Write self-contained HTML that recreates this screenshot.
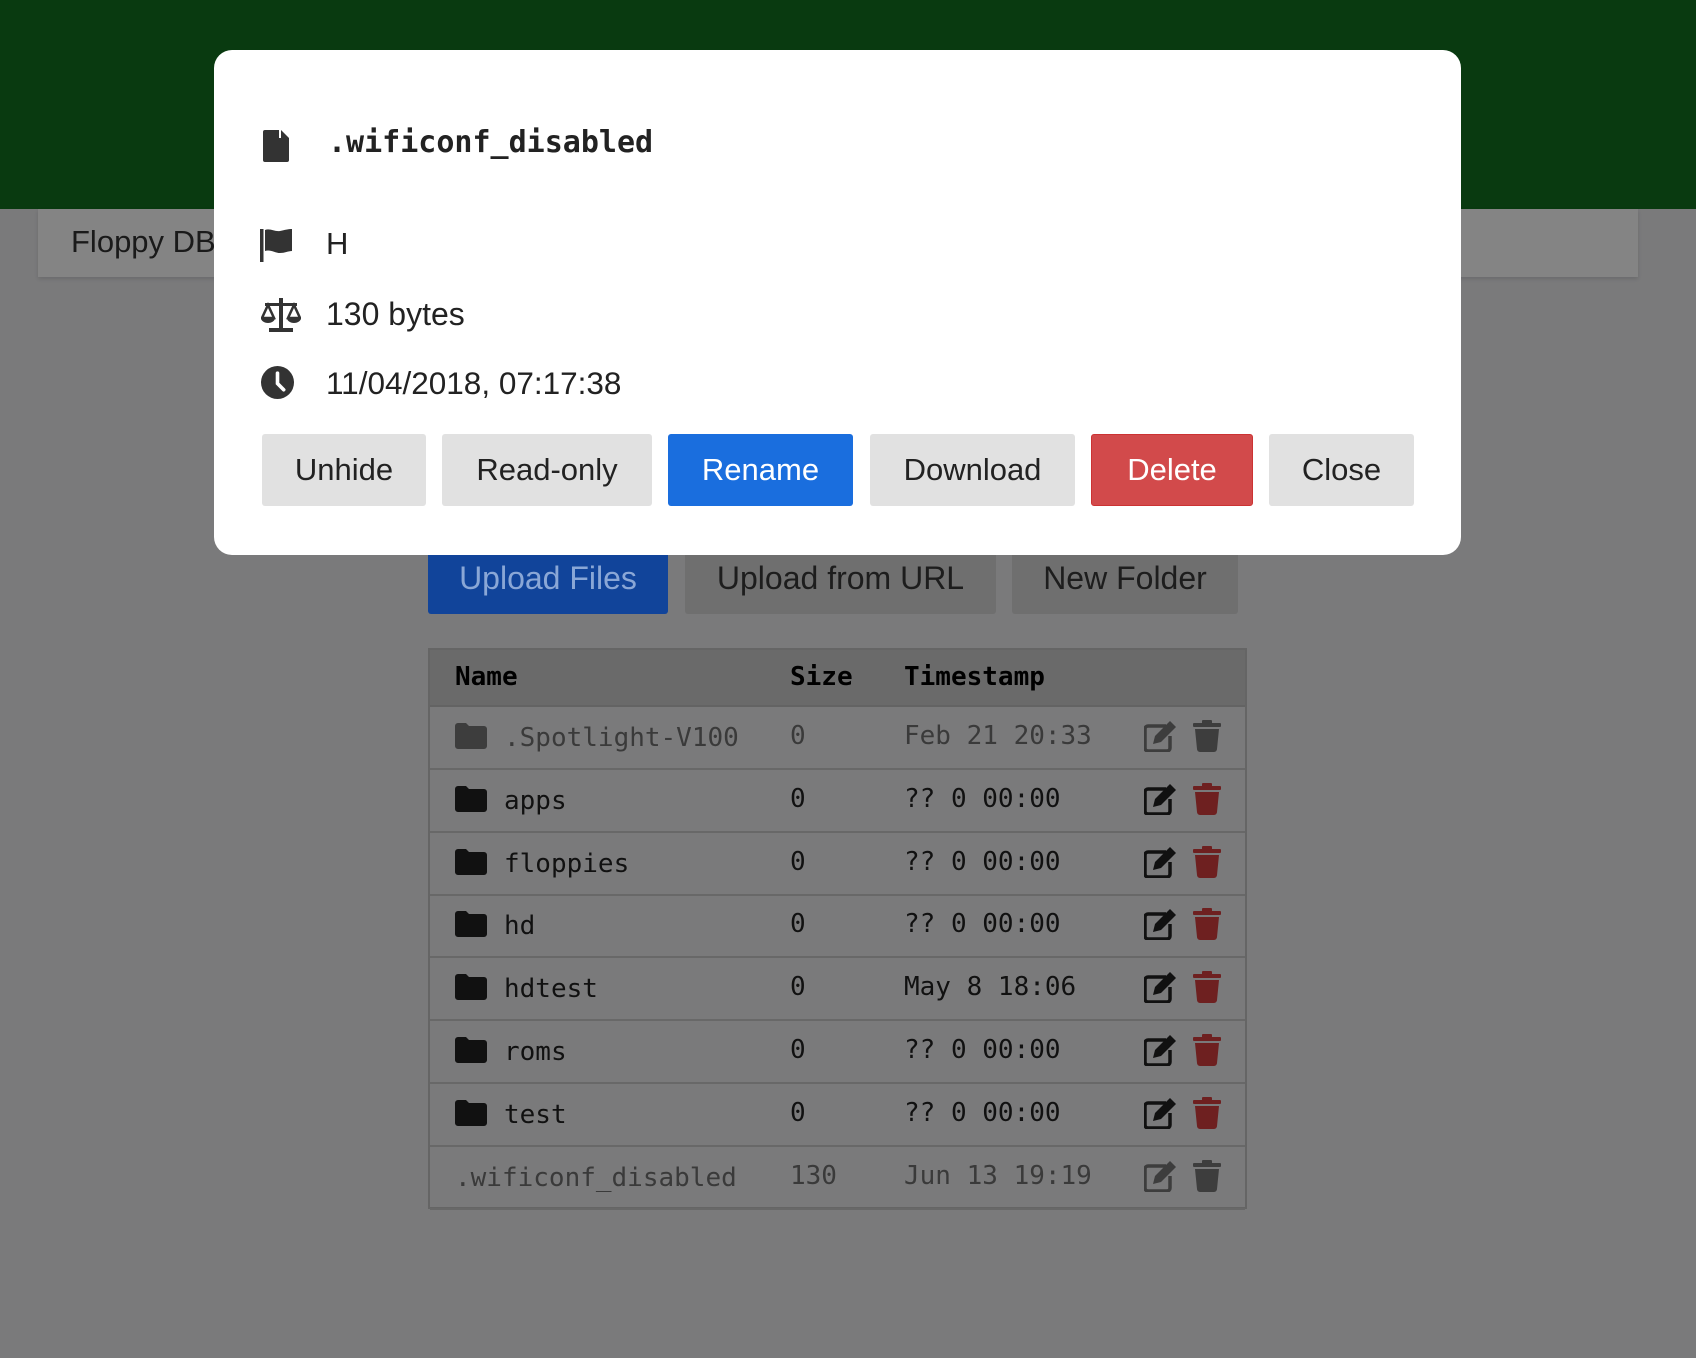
<!DOCTYPE html>
<html><head><meta charset="utf-8"><style>
*{margin:0;padding:0;box-sizing:border-box}
body{width:1696px;height:1358px;background:#7a7a7b;position:relative;overflow:hidden;font-family:"Liberation Sans",sans-serif}
.abs{position:absolute}
.green{left:0;top:0;width:1696px;height:209px;background:#093a10}
.bar{left:38px;top:209px;width:1600px;height:68px;background:#848484;box-shadow:0 2px 4px rgba(0,0,0,.12)}
.bar span{position:absolute;left:33px;top:15px;font-size:31px;color:#1a1a1a}
.btn{position:absolute;display:flex;align-items:center;justify-content:center;font-size:32px;border-radius:3px}
.tbl{left:428px;top:648px;width:819px;height:561px;border:2px solid #656565;background:#7a7a7b}
.hdr{position:absolute;left:0;top:0;width:815px;height:57px;background:#6a6a6a;border-bottom:2px solid #636363}
.mono{font-family:"DejaVu Sans Mono","Liberation Mono",monospace}
.t{position:absolute;font-size:26px;white-space:pre;line-height:30px}
.modal{left:214px;top:50px;width:1247px;height:505px;background:#fff;border-radius:18px}
.mb{position:absolute;top:384px;height:72px;display:flex;align-items:center;justify-content:center;font-size:31px;border-radius:3px;background:#e1e1e1;color:#222}
.info{position:absolute;left:112px;font-size:31px;color:#222;line-height:36px}
</style></head><body>
<div class="abs green"></div>
<div class="abs bar"><span>Floppy DB</span></div>

<div class="btn" style="left:428px;top:542px;width:240px;height:72px;background:#11449a;color:#8aa7d6">Upload Files</div>
<div class="btn" style="left:685px;top:542px;width:311px;height:72px;background:#6f6f6f;color:#1d1d1d">Upload from URL</div>
<div class="btn" style="left:1012px;top:542px;width:226px;height:72px;background:#6f6f6f;color:#1d1d1d">New Folder</div>

<svg width="0" height="0" style="position:absolute">
<defs>
<symbol id="folder" viewBox="0 0 32 26"><path d="M0 3a3 3 0 013-3h8l3 3h15a3 3 0 013 3v17a3 3 0 01-3 3H3a3 3 0 01-3-3z" /></symbol>
<symbol id="edit" viewBox="0 0 33 32"><path d="M22 6H4a3 3 0 00-3 3v19a3 3 0 003 3h19a3 3 0 003-3V16" fill="none" stroke="currentColor" stroke-width="3.5"/><path d="M26 1l6 6-15 15-8 2 2-8z" /></symbol>
<symbol id="trash" viewBox="0 0 28 32"><rect x="0" y="3" width="28" height="4" rx="1"/><rect x="9" y="0" width="10" height="4" rx="1"/><path d="M2 9h24l-2 20a3 3 0 01-3 3H7a3 3 0 01-3-3z"/></symbol>
</defs></svg>

<div class="abs tbl">
 <div class="hdr mono">
  <div class="t" style="left:25px;top:12px;font-weight:bold;color:#000">Name</div>
  <div class="t" style="left:360px;top:12px;font-weight:bold;color:#000">Size</div>
  <div class="t" style="left:474px;top:12px;font-weight:bold;color:#000">Timestamp</div>
 </div>
</div>
<div id="rows"></div>

<div class="abs modal">
 <svg class="abs" style="left:49px;top:80px" width="26" height="32" viewBox="0 0 26 32"><path d="M0 2a2 2 0 012-2h14v8h10v22a2 2 0 01-2 2H2a2 2 0 01-2-2zM18 0l8 8h-8z" fill="#333"/></svg>
 <div class="abs mono" style="left:114px;top:75px;font-size:30px;font-weight:bold;color:#222">.wificonf_disabled</div>

 <svg class="abs" style="left:46px;top:178px" width="33" height="34" viewBox="0 0 33 34"><rect x="0" y="1" width="3.5" height="33" fill="#333"/><path d="M5 2c5-2 10 2 15 1s8-2 12-2v22c-4 0-7 2-12 2S10 21 5 23z" fill="#333"/></svg>
 <div class="info" style="top:176px">H</div>

 <svg class="abs" style="left:47px;top:248px" width="40" height="34" viewBox="0 0 40 34"><g fill="#333"><rect x="18" y="0" width="4" height="30"/><rect x="8" y="30" width="24" height="4"/><rect x="4" y="5" width="32" height="3"/><path d="M1 20l6-13 6 13zM27 20l6-13 6 13z" fill="none" stroke="#333" stroke-width="2.5"/><path d="M0 20h14a7 5 0 01-14 0zM26 20h14a7 5 0 01-14 0z"/></g></svg>
 <div class="info" style="top:246px;font-size:32px">130 bytes</div>

 <svg class="abs" style="left:47px;top:316px" width="33" height="33" viewBox="0 0 32 32"><circle cx="16" cy="16" r="16" fill="#333"/><path d="M16 7v10l6 6" fill="none" stroke="#fff" stroke-width="3.5" stroke-linecap="round"/></svg>
 <div class="info" style="top:315px;font-size:31.5px">11/04/2018, 07:17:38</div>

 <div class="mb" style="left:48px;width:164px">Unhide</div>
 <div class="mb" style="left:228px;width:210px">Read-only</div>
 <div class="mb" style="left:454px;width:185px;background:#1a6ede;color:#fff">Rename</div>
 <div class="mb" style="left:656px;width:205px">Download</div>
 <div class="mb" style="left:877px;width:162px;background:#d24a4b;color:#fff;border:1px solid #c33">Delete</div>
 <div class="mb" style="left:1055px;width:145px">Close</div>
</div>

<script>
var rows=[
 [1,".Spotlight-V100","0","Feb 21 20:33",1],
 [1,"apps","0","?? 0 00:00",0],
 [1,"floppies","0","?? 0 00:00",0],
 [1,"hd","0","?? 0 00:00",0],
 [1,"hdtest","0","May 8 18:06",0],
 [1,"roms","0","?? 0 00:00",0],
 [1,"test","0","?? 0 00:00",0],
 [0,".wificonf_disabled","130","Jun 13 19:19",1]];
var h="";
rows.forEach(function(r,i){
 var top=707+i*62.8, cy=top+30;
 var c=r[4]?"#3d3d3d":"#111", tc=r[4]?"#3d3d3d":"#6e2020", tx=r[4]?"#3a3a3a":"#111";
 h+='<div class="abs" style="left:430px;top:'+(top+61)+'px;width:815px;height:2px;background:#686868"></div>';
 if(r[0]) h+='<svg class="abs" style="left:455px;top:'+(cy-14)+'px;fill:'+c+'" width="32" height="26"><use href="#folder"/></svg>';
 var nx=r[0]?504:455;
 h+='<div class="abs mono t" style="left:'+nx+'px;top:'+(cy-14)+'px;color:'+tx+'">'+r[1]+'</div>';
 h+='<div class="abs mono t" style="left:790px;top:'+(cy-16)+'px;color:'+tx+'">'+r[2]+'</div>';
 h+='<div class="abs mono t" style="left:904px;top:'+(cy-16)+'px;color:'+tx+'">'+r[3]+'</div>';
 h+='<svg class="abs" style="left:1144px;top:'+(cy-17)+'px;fill:'+c+';color:'+c+'" width="33" height="32"><use href="#edit"/></svg>';
 h+='<svg class="abs" style="left:1193px;top:'+(cy-17)+'px;fill:'+tc+'" width="28" height="32"><use href="#trash"/></svg>';
});
document.getElementById("rows").innerHTML=h;
</script>
</body></html>
